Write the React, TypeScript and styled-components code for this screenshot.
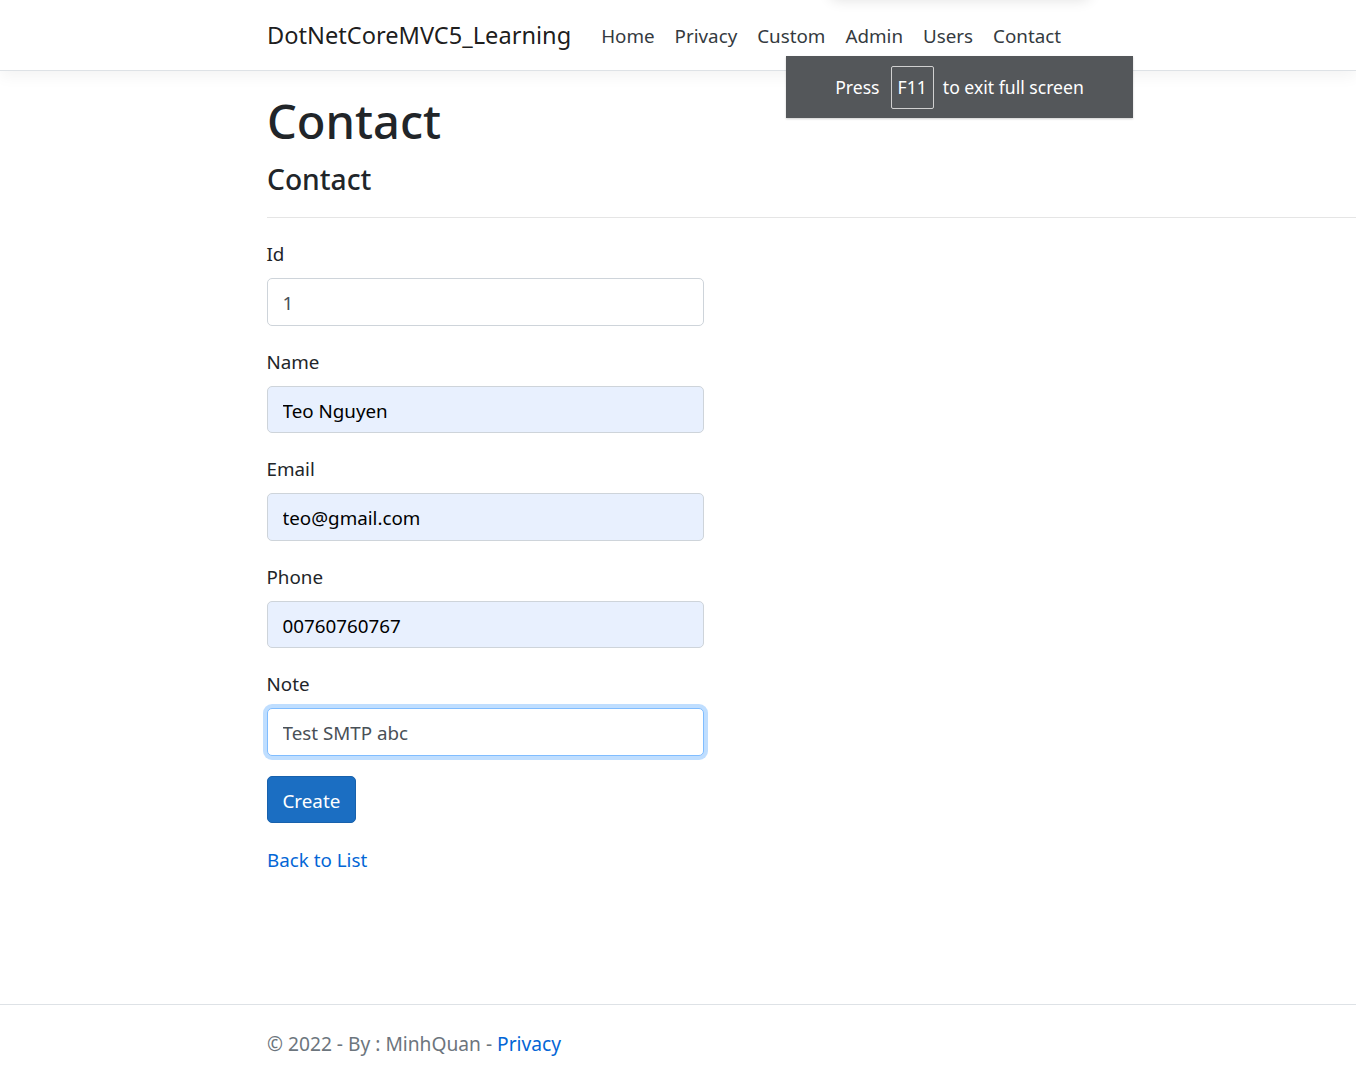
import React from "react";
import styled, { createGlobalStyle } from "styled-components";

const GlobalStyle = createGlobalStyle`
  *, *::before, *::after { box-sizing: border-box; }
  html, body { margin: 0; padding: 0; }
  body {
    font-family: "Noto Sans", "Open Sans", Arial, sans-serif;
    font-size: 18.8px;
    line-height: 30px;
    color: #212529;
    background: #fff;
    overflow: hidden;
  }
`;

const Page = styled.div`
  min-height: 100vh;
  display: flex;
  flex-direction: column;
  position: relative;
`;

const Header = styled.header`
  background: #fff;
  border-bottom: 1px solid #dee2e6;
  box-shadow: 0 5px 15px rgba(0, 0, 0, 0.05);
  margin-bottom: 20px;
`;

const Container = styled.div`
  padding-left: 267px;
`;

const NavBar = styled(Container)`
  display: flex;
  align-items: center;
  padding-top: 10px;
  padding-bottom: 10px;
`;

const Brand = styled.a`
  font-size: 23.6px;
  line-height: 37.5px;
  padding: 7.25px 0 5.25px;
  margin-right: 20px;
  color: rgba(0, 0, 0, 0.9);
  text-decoration: none;
  white-space: nowrap;
`;

const NavList = styled.ul`
  display: flex;
  list-style: none;
  margin: 0;
  padding: 0;
`;

const NavLink = styled.a`
  display: block;
  padding: 11px 10px 9px;
  line-height: 30px;
  color: #343a40;
  text-decoration: none;
`;

const Main = styled(Container)`
  flex: 1;
  padding-bottom: 15px;
`;

const Title = styled.h1`
  font-size: 47px;
  font-weight: 500;
  line-height: 60px;
  margin: 0 0 10px;
`;

const SubTitle = styled.h4`
  font-size: 28.2px;
  font-weight: 500;
  line-height: 36px;
  margin: 0 0 10px;
`;

const Rule = styled.hr`
  margin: 20px 0;
  border: 0;
  border-top: 1px solid rgba(0, 0, 0, 0.1);
`;

const FormCol = styled.div`
  width: 437.5px;
  margin-left: -0.5px;
`;

const FormGroup = styled.div`
  margin-bottom: 20px;
`;

const Label = styled.label`
  display: inline-block;
  margin-bottom: 10px;
  padding-top: 2px;
  line-height: 28px;
`;

const Input = styled.input<{ $autofill?: boolean; $focused?: boolean }>`
  display: block;
  width: 100%;
  height: 47.5px;
  padding: 9px 15px 6px;
  font-family: inherit;
  font-size: 18.8px;
  line-height: 30px;
  color: ${(p) => (p.$autofill ? "#000" : "#495057")};
  background: ${(p) => (p.$autofill ? "#e8f0fe" : "#fff")};
  border: 1px solid ${(p) => (p.$focused ? "#80bdff" : "#ced4da")};
  border-radius: 5px;
  outline: none;
  box-shadow: ${(p) => (p.$focused ? "0 0 0 4px rgba(0, 123, 255, 0.25)" : "none")};
`;

const Button = styled.button`
  font-family: inherit;
  font-size: 18.8px;
  line-height: 30px;
  height: 47.5px;
  padding: 9px 15px 6px;
  color: #fff;
  background: #1b6ec2;
  border: 1px solid #1861ac;
  border-radius: 5px;
  cursor: pointer;
`;

const Link = styled.a`
  color: #0366d6;
  text-decoration: none;
`;

const BackRow = styled.div`
  padding-top: 2px;
`;

const Footer = styled.footer`
  border-top: 1px solid #dee2e6;
  color: #6c757d;
  font-size: 19.2px;
  line-height: 75px;
  padding-top: 1px;
  height: 76px;
  white-space: nowrap;
`;

const FullscreenHint = styled.div`
  position: absolute;
  top: 56px;
  left: 786px;
  width: 347px;
  height: 62px;
  background: #54575a;
  color: #fff;
  display: flex;
  align-items: center;
  justify-content: center;
  font-size: 17.6px;
  box-shadow: 0 1px 2px rgba(0, 0, 0, 0.2);
`;

const Key = styled.span`
  display: inline-flex;
  align-items: center;
  height: 43px;
  padding: 0 6px;
  margin: 0 9px 0 11px;
  border: 1px solid #d0d0d0;
  border-radius: 2px;
`;

const TopShade = styled.div`
  position: absolute;
  top: -40px;
  left: 830px;
  width: 260px;
  height: 40px;
  border-radius: 8px;
  box-shadow: 0 0 14px rgba(0, 0, 0, 0.12);
`;

const fields = [
  { label: "Id", value: "1" },
  { label: "Name", value: "Teo Nguyen", autofill: true },
  { label: "Email", value: "teo@gmail.com", autofill: true },
  { label: "Phone", value: "00760760767", autofill: true },
  { label: "Note", value: "Test SMTP abc", focused: true },
];

export default function App() {
  return (
    <>
      <GlobalStyle />
      <Page>
        <Header>
          <NavBar>
            <Brand href="#">DotNetCoreMVC5_Learning</Brand>
            <NavList>
              {["Home", "Privacy", "Custom", "Admin", "Users", "Contact"].map((n) => (
                <li key={n}>
                  <NavLink href="#">{n}</NavLink>
                </li>
              ))}
            </NavList>
          </NavBar>
        </Header>
        <Main>
          <Title>Contact</Title>
          <SubTitle>Contact</SubTitle>
          <Rule />
          <FormCol>
            <form onSubmit={(e) => e.preventDefault()}>
              {fields.map((f) => (
                <FormGroup key={f.label}>
                  <Label>{f.label}</Label>
                  <Input
                    defaultValue={f.value}
                    $autofill={f.autofill}
                    $focused={f.focused}
                  />
                </FormGroup>
              ))}
              <FormGroup>
                <Button type="submit">Create</Button>
              </FormGroup>
            </form>
          </FormCol>
          <BackRow>
            <Link href="#">Back to List</Link>
          </BackRow>
        </Main>
        <Footer>
          <Container>
            © 2022 - By : MinhQuan - <Link href="#">Privacy</Link>
          </Container>
        </Footer>
        <TopShade />
        <FullscreenHint>
          Press <Key>F11</Key> to exit full screen
        </FullscreenHint>
      </Page>
    </>
  );
}
